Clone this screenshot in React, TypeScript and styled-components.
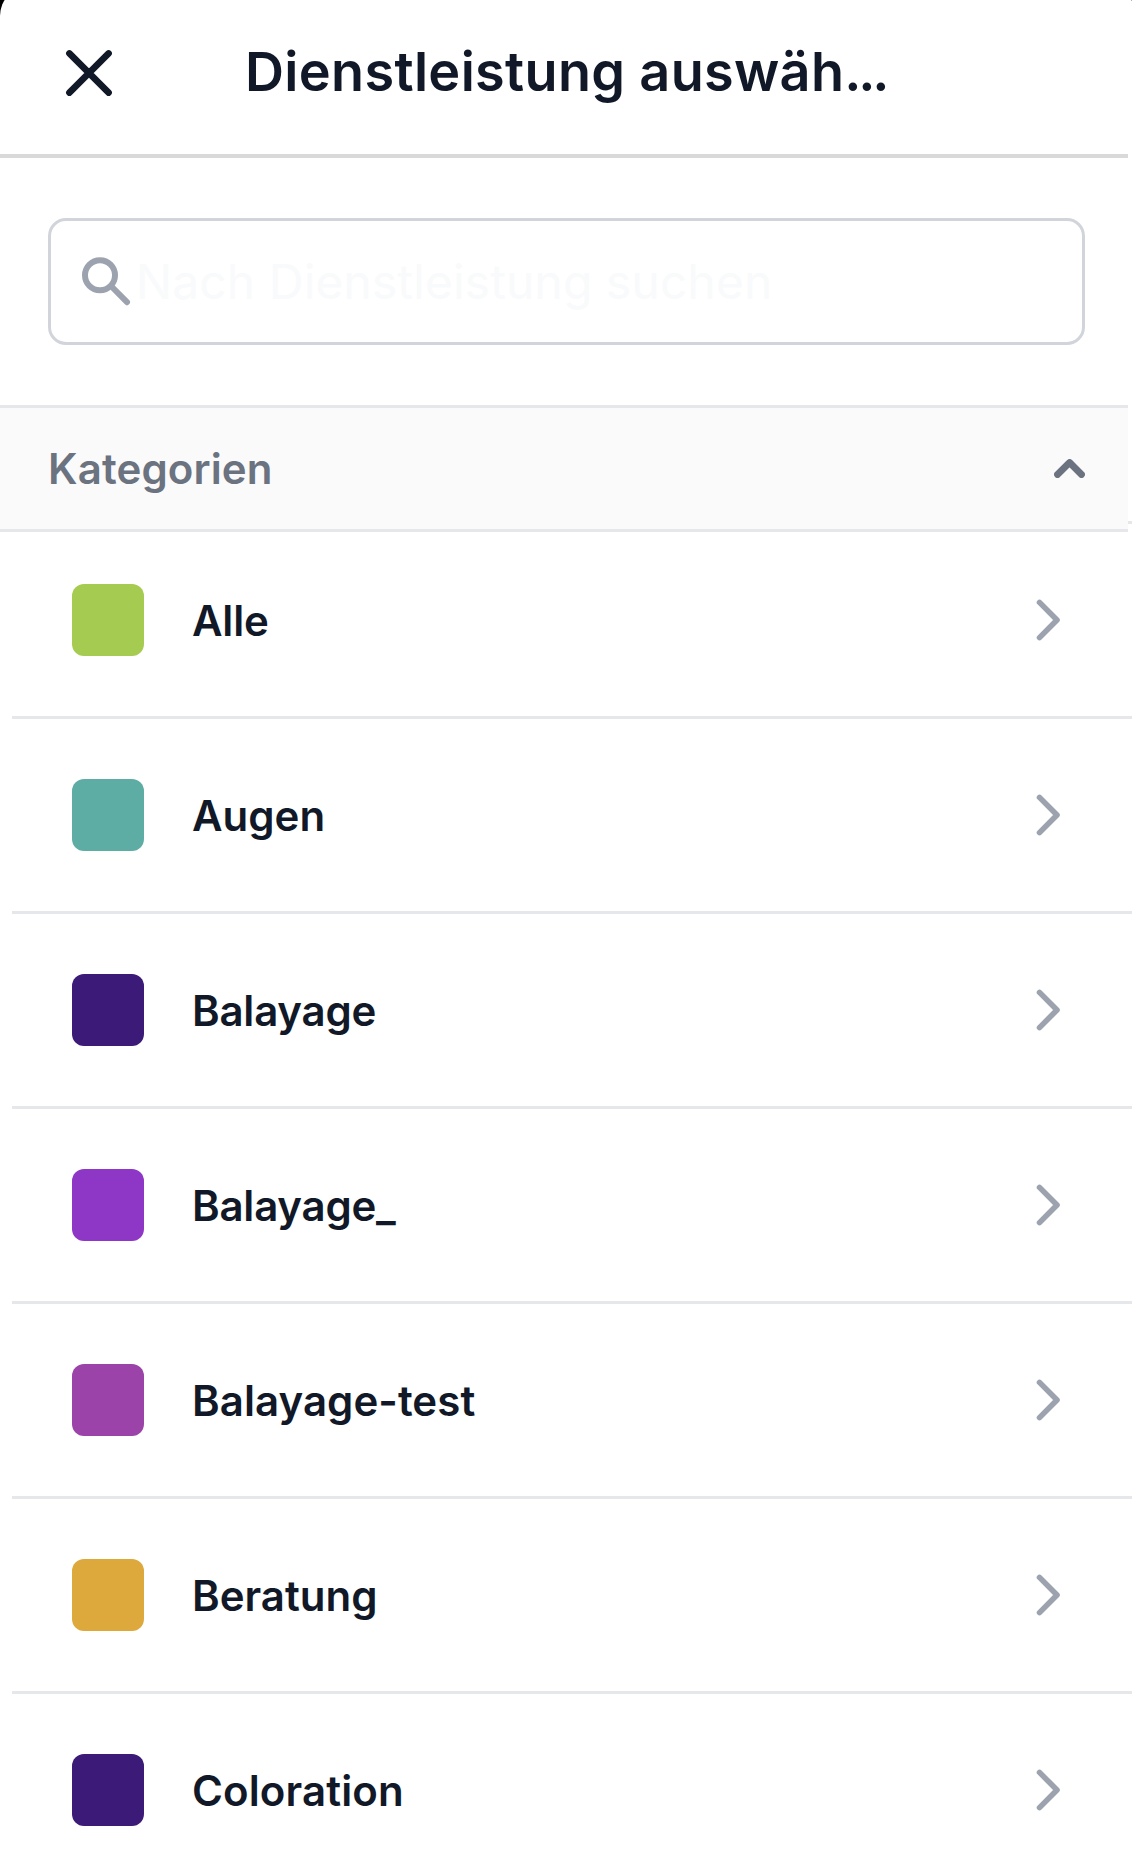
import React from "react";
import styled, { createGlobalStyle } from "styled-components";

const GlobalStyle = createGlobalStyle`
  *, *::before, *::after { box-sizing: border-box; }
  html, body { margin: 0; background: #000; }
  body { font-family: Inter, "Liberation Sans", sans-serif; color: #111827; }
`;

const Viewport = styled.div`
  width: 1132px;
  height: 1858px;
  overflow: hidden;
  background: #000;
`;

const Sheet = styled.main`
  width: 1136px;
  height: 1890px;
  margin-top: -14px;
  padding-top: 14px;
  border-radius: 30px 30px 0 0;
  background: #fff;
  overflow: hidden;
`;

const Header = styled.header`
  display: flex;
  align-items: center;
  width: 1128px;
  height: 158px;
  padding: 0 48px 9px 64px;
  border-bottom: 4px solid #d9d9d9;
`;

const IconButton = styled.button`
  display: flex;
  align-items: center;
  justify-content: center;
  padding: 0;
  border: 0;
  background: none;
  color: inherit;
`;

const Title = styled.h1`
  margin: 0 0 1px 131px;
  font-size: 54px;
  font-weight: 600;
  line-height: 66px;
  letter-spacing: 0.33px;
  white-space: nowrap;
`;

const Ellipsis = styled.span`
  letter-spacing: -3.2px;
`;

const SearchArea = styled.div`
  padding: 60px 0 60px 48px;
`;

const SearchField = styled.label`
  display: flex;
  align-items: center;
  width: 1037px;
  height: 127px;
  padding: 0 30px;
  border: 3px solid #d1d5db;
  border-radius: 18px;
  color: #9ca3af;
`;

const SearchInput = styled.input`
  flex: 1;
  height: 60px;
  margin-left: 5px;
  padding: 0;
  border: 0;
  outline: 0;
  background: none;
  color: #111827;
  font: 400 48px/60px Inter, "Liberation Sans", sans-serif;
  letter-spacing: 0.1px;
  &::placeholder { color: #f9fafb; opacity: 1; }
`;

const SectionBar = styled.div`
  position: relative;
  z-index: 1;
  display: flex;
  align-items: center;
  justify-content: space-between;
  width: 1128px;
  height: 127px;
  padding: 0 43px 0 48px;
  border: solid #e5e7eb;
  border-width: 3px 0;
  background: #fafafa;
  color: #6b7280;
`;

const SectionTitle = styled.h2`
  margin: 0;
  font-size: 42px;
  font-weight: 600;
  line-height: 52px;
  letter-spacing: 0.12px;
`;

const List = styled.ul`
  width: 1120px;
  margin: -11px 0 0 12px;
  padding: 0;
  list-style: none;
`;

const Row = styled.li`
  display: flex;
  align-items: center;
  height: 195px;
  padding: 0 72px 0 60px;
  border-top: 3px solid #e5e7eb;
  color: #9ca3af;
`;

const Swatch = styled.span<{ $color: string }>`
  width: 72px;
  height: 72px;
  border-radius: 12px;
  background: ${(p) => p.$color};
`;

const Name = styled.span<{ $tracking: number }>`
  flex: 1;
  margin: 1px 0 0 48px;
  color: #111827;
  font-size: 42px;
  font-weight: 600;
  line-height: 52px;
  letter-spacing: ${(p) => p.$tracking}px;
`;

const categories = [
  { name: "Alle", color: "#a5cb50", tracking: -0.2 },
  { name: "Augen", color: "#5eada5", tracking: 0 },
  { name: "Balayage", color: "#3c1a78", tracking: -0.22 },
  { name: "Balayage_", color: "#8e36c5", tracking: -0.22 },
  { name: "Balayage-test", color: "#9b43a8", tracking: 0.06 },
  { name: "Beratung", color: "#dea93c", tracking: 0 },
  { name: "Coloration", color: "#3c1a78", tracking: 0.12 },
];

const CloseIcon = () => (
  <svg width="50" height="50" viewBox="0 0 50 50" fill="none" stroke="currentColor" strokeWidth="6.6" strokeLinecap="round">
    <path d="M5.4 5.4 44.6 44.6M44.6 5.4 5.4 44.6" />
  </svg>
);

const SearchIcon = () => (
  <svg width="50" height="50" viewBox="0 0 50 50" fill="none" stroke="currentColor" strokeWidth="6" strokeLinecap="round">
    <circle cx="19" cy="18.2" r="15" />
    <path d="m31 30 15 15.2" />
  </svg>
);

const ChevronUp = () => (
  <svg width="31" height="19" viewBox="0 0 31 19" fill="none" stroke="currentColor" strokeWidth="6.8" strokeLinecap="round" strokeLinejoin="round">
    <path d="M3.5 15.5 15.6 3.5 27.5 15.5" />
  </svg>
);

const ChevronRight = () => (
  <svg width="24" height="42" viewBox="0 0 24 42" fill="none" stroke="currentColor" strokeWidth="5.6" strokeLinecap="round" strokeLinejoin="round">
    <path d="M3.5 3.4 21 21 3.5 38.6" />
  </svg>
);

export default function App() {
  return (
    <>
      <GlobalStyle />
      <Viewport>
        <Sheet>
          <Header>
            <IconButton aria-label="Schließen">
              <CloseIcon />
            </IconButton>
            <Title>
              Dienstleistung auswäh<Ellipsis>...</Ellipsis>
            </Title>
          </Header>
          <SearchArea>
            <SearchField>
              <SearchIcon />
              <SearchInput placeholder="Nach Dienstleistung suchen" />
            </SearchField>
          </SearchArea>
          <SectionBar>
            <SectionTitle>Kategorien</SectionTitle>
            <IconButton aria-label="Einklappen">
              <ChevronUp />
            </IconButton>
          </SectionBar>
          <List>
            {categories.map((c) => (
              <Row key={c.name}>
                <Swatch $color={c.color} />
                <Name $tracking={c.tracking}>{c.name}</Name>
                <ChevronRight />
              </Row>
            ))}
          </List>
        </Sheet>
      </Viewport>
    </>
  );
}
